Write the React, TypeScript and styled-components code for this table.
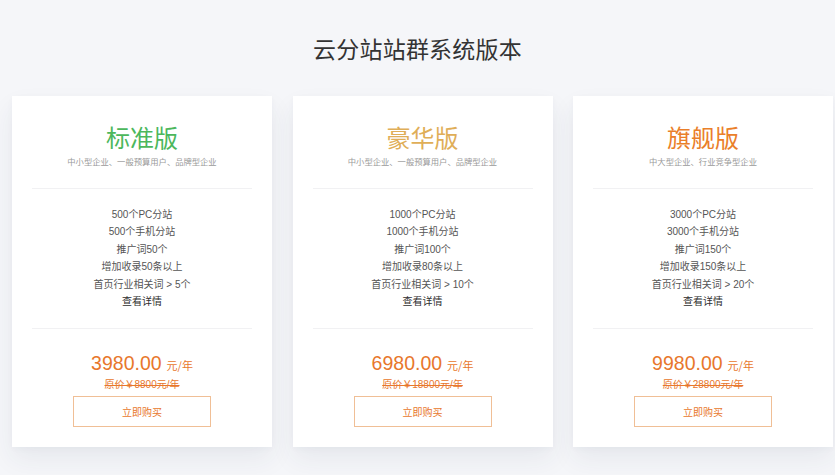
import React from "react";
import styled, { createGlobalStyle } from "styled-components";

const Global = createGlobalStyle`
  html, body { margin: 0; padding: 0; background: #f5f6f9; }
  body { font-family: "Liberation Sans", "Noto Sans CJK SC", sans-serif; }
  * { box-sizing: border-box; }
`;

const Page = styled.div`
  width: 835px;
  height: 475px;
  overflow: hidden;
  background: #f5f6f9;
`;

const Heading = styled.h1`
  margin: 0;
  padding-top: 34px;
  height: 96px;
  text-align: center;
  font-size: 23px;
  line-height: 32px;
  font-weight: 400;
  color: #333;
  letter-spacing: 0.2px;
`;

const Grid = styled.div`
  display: grid;
  grid-template-columns: repeat(3, 260px);
  column-gap: 20.5px;
  padding-left: 12px;
`;

const Card = styled.div`
  background: #fff;
  padding: 0 20px 20px;
  box-shadow: 0 12px 24px rgba(40, 50, 90, 0.07), 0 2px 6px rgba(40, 50, 90, 0.03);
  text-align: center;
`;

const Header = styled.div`
  padding: 26px 0 21px;
  border-bottom: 1px solid #f1f1f3;
`;

const Title = styled.div<{ $color: string }>`
  font-size: 24px;
  line-height: 30px;
  color: ${(p) => p.$color};
  font-family: "Noto Sans CJK SC", sans-serif;
  font-weight: 400;
`;

const Sub = styled.div`
  margin-top: 3px;
  font-size: 8.3px;
  line-height: 12px;
  color: #9a9a9a;
  font-family: "Noto Sans CJK SC", sans-serif;
`;

const Features = styled.ul`
  list-style: none;
  margin: 0;
  padding: 16.5px 0 17.5px;
  border-bottom: 1px solid #f1f1f3;
`;

const Feature = styled.li<{ $strong?: boolean }>`
  font-size: 10px;
  line-height: 17.5px;
  color: ${(p) => (p.$strong ? "#2e2e2e" : "#555")};
  font-weight: 400;
`;

const PriceBlock = styled.div`
  padding-top: 21px;
  display: flex;
  flex-direction: column;
  align-items: center;
`;

const PriceLine = styled.div`
  line-height: 26px;
  color: #e8772c;
  display: flex;
  align-items: baseline;
  gap: 5px;
`;

const Amount = styled.span`
  font-size: 19.5px;
`;

const Unit = styled.span`
  font-size: 11px;
  font-family: "Noto Sans CJK SC", sans-serif;
`;

const Original = styled.div`
  margin-top: 1px;
  font-size: 10px;
  line-height: 12px;
  color: #e8772c;
  text-decoration: line-through;
`;

const BuyButton = styled.button`
  margin-top: 5px;
  width: 138px;
  height: 31px;
  border: 1px solid #f0bf96;
  background: #fff;
  color: #e8772c;
  font-size: 10px;
  font-family: "Noto Sans CJK SC", sans-serif;
  cursor: pointer;
  padding: 0;
`;

const plans = [
  {
    name: "标准版",
    color: "#4cb75c",
    sub: "中小型企业、一般预算用户、品牌型企业",
    features: ["500个PC分站", "500个手机分站", "推广词50个", "增加收录50条以上", "首页行业相关词 > 5个"],
    price: "3980.00",
    original: "原价￥8800元/年",
  },
  {
    name: "豪华版",
    color: "#dfae58",
    sub: "中小型企业、一般预算用户、品牌型企业",
    features: ["1000个PC分站", "1000个手机分站", "推广词100个", "增加收录80条以上", "首页行业相关词 > 10个"],
    price: "6980.00",
    original: "原价￥18800元/年",
  },
  {
    name: "旗舰版",
    color: "#ea7f2a",
    sub: "中大型企业、行业竞争型企业",
    features: ["3000个PC分站", "3000个手机分站", "推广词150个", "增加收录150条以上", "首页行业相关词 > 20个"],
    price: "9980.00",
    original: "原价￥28800元/年",
  },
];

export default function App() {
  return (
    <Page>
      <Global />
      <Heading>云分站站群系统版本</Heading>
      <Grid>
        {plans.map((p) => (
          <Card key={p.name}>
            <Header>
              <Title $color={p.color}>{p.name}</Title>
              <Sub>{p.sub}</Sub>
            </Header>
            <Features>
              {p.features.map((f) => (
                <Feature key={f}>{f}</Feature>
              ))}
              <Feature $strong>查看详情</Feature>
            </Features>
            <PriceBlock>
              <PriceLine>
                <Amount>{p.price}</Amount>
                <Unit>元/年</Unit>
              </PriceLine>
              <Original>{p.original}</Original>
              <BuyButton>立即购买</BuyButton>
            </PriceBlock>
          </Card>
        ))}
      </Grid>
    </Page>
  );
}
